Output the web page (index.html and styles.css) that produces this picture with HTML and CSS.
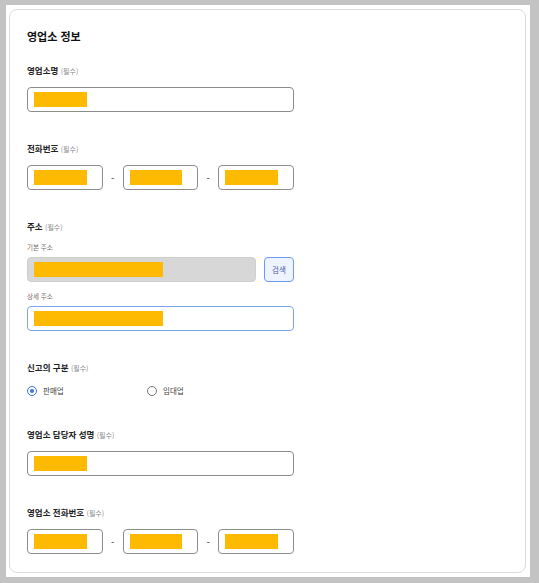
FILE: index.html
```html
<!DOCTYPE html>
<html lang="ko">
<head>
<meta charset="utf-8">
<title>영업소 정보</title>
<link rel="stylesheet" href="styles.css">
</head>
<body>
<div class="frame">
  <div class="card">
    <h2 class="title">영업소 정보</h2>

    <div class="field">
      <div class="label">영업소명 <span class="req">(필수)</span></div>
      <div class="input"><span class="mask w53"></span></div>
    </div>

    <div class="field">
      <div class="label">전화번호 <span class="req">(필수)</span></div>
      <div class="phone">
        <div class="input"><span class="mask w53"></span></div>
        <span class="dash">-</span>
        <div class="input"><span class="mask w52"></span></div>
        <span class="dash">-</span>
        <div class="input"><span class="mask w53"></span></div>
      </div>
    </div>

    <div class="field">
      <div class="label">주소 <span class="req">(필수)</span></div>
      <div class="sublabel">기본 주소</div>
      <div class="addr-row">
        <div class="input disabled"><span class="mask w129"></span></div>
        <button class="btn-search" type="button">검색</button>
      </div>
      <div class="sublabel second">상세 주소</div>
      <div class="input focus"><span class="mask w129"></span></div>
    </div>

    <div class="field">
      <div class="label">신고의 구분 <span class="req">(필수)</span></div>
      <div class="radios">
        <label class="radio checked"><span class="dot"></span>판매업</label>
        <label class="radio"><span class="dot"></span>임대업</label>
      </div>
    </div>

    <div class="field">
      <div class="label">영업소 담당자 성명 <span class="req">(필수)</span></div>
      <div class="input"><span class="mask w53"></span></div>
    </div>

    <div class="field">
      <div class="label">영업소 전화번호 <span class="req">(필수)</span></div>
      <div class="phone">
        <div class="input"><span class="mask w53"></span></div>
        <span class="dash">-</span>
        <div class="input"><span class="mask w52"></span></div>
        <span class="dash">-</span>
        <div class="input"><span class="mask w53"></span></div>
      </div>
    </div>
  </div>
</div>
</body>
</html>
```

FILE: styles.css
```css
* { box-sizing: border-box; }

body {
  margin: 0;
  background: #c3c3c3;
  font-family: "Noto Sans CJK KR", "Noto Sans", sans-serif;
  color: #222;
}

.frame {
  margin: 5px 9px 7px 6px;
  padding: 4px 4px 4px 3px;
  background: #fff;
}

.card {
  border: 1px solid #dcdcdc;
  border-radius: 8px;
  padding: 19px 231px 18px 17px;
}

.title {
  margin: 0;
  height: 14px;
  font-size: 11px;
  line-height: 14px;
  font-weight: 700;
  color: #111;
}

.field { margin-top: 30px; }
.title + .field { margin-top: 21px; }

.label {
  height: 12px;
  font-size: 8.5px;
  line-height: 12px;
  font-weight: 700;
  color: #222;
  margin-bottom: 11px;
  white-space: nowrap;
}

.req {
  font-size: 7px;
  line-height: 1;
  font-weight: 400;
  color: #8a8a8a;
}

.sublabel {
  height: 10px;
  font-size: 6.5px;
  line-height: 10px;
  color: #7a6a6a;
  margin-top: -1px;
  margin-bottom: 5px;
}
.sublabel.second { margin-top: 9px; }

.input {
  height: 25px;
  border: 1px solid #8c8c8c;
  border-radius: 4px;
  background: #fff;
  padding: 4px 6px;
  display: flex;
}

.input.disabled {
  flex: 1;
  background: #d7d7d7;
  border-color: #cfcfcf;
}

.input.focus { border-color: #7ea3ee; }

.mask {
  display: block;
  height: 15px;
  background: #fdba00;
}
.w52 { width: 52px; }
.w53 { width: 53px; }
.w129 { width: 129px; }

.phone {
  display: grid;
  grid-template-columns: 1fr 20px 1fr 20px 1fr;
  align-items: center;
  height: 25px;
}

.dash {
  text-align: center;
  font-size: 10px;
  line-height: 12px;
  color: #444;
}

.addr-row {
  display: flex;
  gap: 8px;
}

.btn-search {
  width: 30px;
  height: 25px;
  padding: 0;
  border: 1px solid #6f9af0;
  border-radius: 4px;
  background: #eef4ff;
  color: #4d5da0;
  font-family: inherit;
  font-size: 7.5px;
}

.radios {
  display: flex;
  height: 14px;
  align-items: center;
}

.radio {
  width: 120px;
  height: 14px;
  display: flex;
  align-items: center;
  gap: 6px;
  font-size: 7.5px;
  line-height: 14px;
  color: #444;
}

.dot {
  width: 10px;
  height: 10px;
  border: 1px solid #777;
  border-radius: 50%;
  position: relative;
}

.radio.checked .dot { border-color: #3d72e0; }
.radio.checked .dot::after {
  content: "";
  position: absolute;
  left: 2px;
  top: 2px;
  width: 4px;
  height: 4px;
  border-radius: 50%;
  background: #3d72e0;
}
```
